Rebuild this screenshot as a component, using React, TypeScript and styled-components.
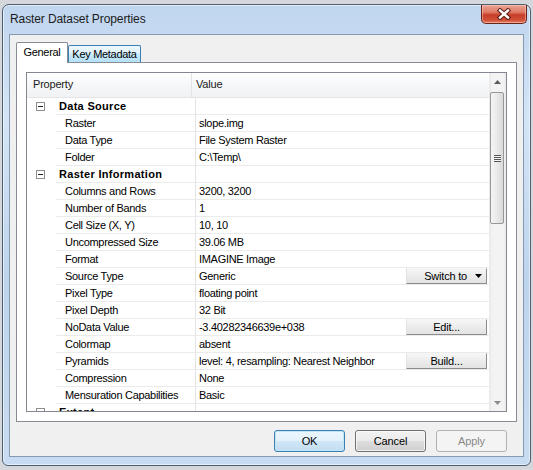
import React from 'react';
import styled, { createGlobalStyle } from 'styled-components';

const GlobalStyle = createGlobalStyle`
  html, body {
    margin: 0;
    padding: 0;
  }
  body {
    width: 533px;
    height: 470px;
    overflow: hidden;
    background: #d4d8dc;
    font-family: "Liberation Sans", Arial, sans-serif;
  }
  * {
    box-sizing: border-box;
  }
`;

const Window = styled.div`
  margin: 4px 2px 0;
  width: 529px;
  height: 462px;
  border: 1px solid #4f5f72;
  border-radius: 7px 7px 6px 6px;
  background: linear-gradient(180deg, #c0d6ef 0%, #d3e4f6 25%, #bdd4ed 60%, #c8dcf1 100%);
  box-shadow: inset 0 0 0 1px rgba(255, 255, 255, 0.55);
  padding: 0 6px 8px;
  display: flex;
  flex-direction: column;
`;

const TitleBar = styled.div`
  height: 29px;
  display: flex;
  align-items: flex-start;
`;

const Title = styled.div`
  padding-left: 1px;
  line-height: 29px;
  font-size: 12px;
  letter-spacing: -0.1px;
  color: #1b1b1b;
`;

const CloseButton = styled.div`
  margin-left: auto;
  margin-right: -3px;
  width: 46px;
  height: 19px;
  border: 1px solid #6b2418;
  border-top: none;
  border-radius: 0 0 5px 5px;
  background: linear-gradient(180deg, #eba495 0%, #de7a66 40%, #c73d27 55%, #d2523a 85%, #e4866a 100%);
  box-shadow: inset 0 0 0 1px rgba(255, 220, 210, 0.45);
  display: flex;
  align-items: center;
  justify-content: center;
`;

const Client = styled.div`
  flex: 1;
  border: 1px solid #8599b0;
  background: #f0f0f0;
  padding: 7px 6px 4px;
  display: flex;
  flex-direction: column;
`;

const TabStrip = styled.div`
  height: 20px;
  display: flex;
  align-items: flex-end;
  position: relative;
  z-index: 1;
`;

const Tab = styled.div<{ $selected?: boolean; $width: number }>`
  width: ${p => p.$width}px;
  height: ${p => (p.$selected ? 21 : 17)}px;
  margin-bottom: ${p => (p.$selected ? -1 : 0)}px;
  border: 1px solid ${p => (p.$selected ? '#898c95' : '#3c7fb1')};
  border-bottom: none;
  border-radius: 2px 2px 0 0;
  background: ${p =>
    p.$selected
      ? '#ffffff'
      : 'linear-gradient(180deg, #eef8fe 0%, #e0f2fc 45%, #c9ebfd 50%, #b5e0f7 100%)'};
  font-size: 11px;
  letter-spacing: -0.3px;
  line-height: ${p => (p.$selected ? 19 : 16)}px;
  text-align: center;
  color: #000;
`;

const TabPanel = styled.div`
  height: 360px;
  border: 1px solid #898c95;
  background: #ffffff;
  padding: 9px;
`;

const Grid = styled.div`
  height: 100%;
  border: 1px solid #828790;
  display: flex;
`;

const GridBody = styled.div`
  flex: 1;
  display: flex;
  flex-direction: column;
  overflow: hidden;
  background: #ffffff;
`;

const Header = styled.div`
  height: 25px;
  flex: none;
  display: flex;
  border-bottom: 1px solid #e3e4e6;
  background: linear-gradient(180deg, #ffffff 0%, #f7f8f9 45%, #f1f2f4 100%);
`;

const HeaderCell = styled.div<{ $width?: number }>`
  ${p => (p.$width ? `width: ${p.$width}px; flex: none;` : 'flex: 1;')}
  padding-left: ${p => (p.$width ? 6 : 4)}px;
  border-right: ${p => (p.$width ? '1px solid #e3e4e6' : 'none')};
  font-size: 11px;
  letter-spacing: -0.2px;
  line-height: 23px;
  color: #1a1a1a;
`;

const Row = styled.div`
  height: 17px;
  flex: none;
  display: flex;
  font-size: 11px;
  line-height: 16px;
  color: #000;
`;

const Gutter = styled.div`
  width: 29px;
  flex: none;
  display: flex;
  align-items: center;
`;

const ExpandBox = styled.div`
  margin-left: 9px;
  width: 9px;
  height: 9px;
  border: 1px solid #8f8f8f;
  background: #fff;
  display: flex;
  align-items: center;
  justify-content: center;

  &::after {
    content: '';
    width: 5px;
    height: 1px;
    background: #222;
  }
`;

const PropCell = styled.div<{ $category?: boolean }>`
  width: 140px;
  flex: none;
  padding-left: ${p => (p.$category ? 3 : 9)}px;
  border-right: 1px solid #e3e3e3;
  border-bottom: 1px solid #ebebeb;
  font-weight: ${p => (p.$category ? 'bold' : 'normal')};
  letter-spacing: ${p => (p.$category ? '0.3px' : '-0.3px')};
  white-space: nowrap;
  overflow: hidden;
`;

const ValueCell = styled.div`
  flex: 1;
  min-width: 0;
  display: flex;
  padding-left: 3px;
  border-bottom: 1px solid #ebebeb;
`;

const ValueText = styled.span`
  flex: 1;
  min-width: 0;
  white-space: nowrap;
  overflow: hidden;
  letter-spacing: -0.3px;
`;

const CellButton = styled.div<{ $dropdown?: boolean }>`
  width: 81px;
  height: 16px;
  flex: none;
  margin-right: 2px;
  display: flex;
  align-items: center;
  justify-content: ${p => (p.$dropdown ? 'flex-end' : 'center')};
  gap: 8px;
  padding: 0 ${p => (p.$dropdown ? 4 : 0)}px 0 0;
  border: 1px solid;
  border-color: #f6f6f6 #8c8c8c #8c8c8c #e2e2e2;
  background: linear-gradient(180deg, #f6f6f6 0%, #ececec 50%, #e2e2e2 100%);
  font-size: 11px;
  letter-spacing: -0.2px;
  color: #000;
`;

const ScrollBar = styled.div`
  width: 17px;
  flex: none;
  display: flex;
  flex-direction: column;
  background: linear-gradient(90deg, #e9e9e9 0%, #f3f3f3 20%, #f3f3f3 85%, #e9e9e9 100%);
`;

const ScrollArrow = styled.div`
  height: 17px;
  flex: none;
  display: flex;
  align-items: center;
  justify-content: center;
`;

const Thumb = styled.div`
  margin: 2px 2px 0 1px;
  height: 132px;
  flex: none;
  border: 1px solid #979797;
  border-radius: 2px;
  background: linear-gradient(90deg, #f5f5f5 0%, #ebebeb 45%, #d9d9d9 100%);
  display: flex;
  align-items: center;
  justify-content: center;
`;

const Grip = styled.div`
  width: 7px;
  height: 7px;
  background: repeating-linear-gradient(180deg, #555 0 1px, #f4f4f4 1px 2px);
`;

const Track = styled.div`
  flex: 1;
`;

const ButtonRow = styled.div`
  margin-top: 8px;
  padding-right: 10px;
  display: flex;
  justify-content: flex-end;
  gap: 10px;
`;

const DialogButton = styled.div<{ $variant?: 'default' | 'disabled' }>`
  width: 71px;
  height: 22px;
  border-radius: 3px;
  border: 1px solid
    ${p => (p.$variant === 'default' ? '#3c7fb1' : p.$variant === 'disabled' ? '#adb2b5' : '#707070')};
  background: ${p =>
    p.$variant === 'disabled'
      ? '#f4f4f4'
      : p.$variant === 'default'
      ? 'linear-gradient(180deg, #eaf6fd 0%, #e4f1fb 48%, #cfe6f6 52%, #c3def2 100%)'
      : 'linear-gradient(180deg, #f2f2f2 0%, #ebebeb 48%, #dddddd 52%, #cfcfcf 100%)'};
  box-shadow: ${p =>
    p.$variant === 'default'
      ? 'inset 0 0 0 1px #c2e4f6'
      : p.$variant === 'disabled'
      ? 'none'
      : 'inset 0 0 0 1px rgba(255, 255, 255, 0.7)'};
  display: flex;
  align-items: center;
  justify-content: center;
  font-size: 11px;
  letter-spacing: -0.1px;
  color: ${p => (p.$variant === 'disabled' ? '#8a8a8a' : '#000')};
`;

type GridRow =
  | { kind: 'cat'; label: string }
  | { kind: 'prop'; label: string; value: string; action?: string; dropdown?: boolean };

const rows: GridRow[] = [
  { kind: 'cat', label: 'Data Source' },
  { kind: 'prop', label: 'Raster', value: 'slope.img' },
  { kind: 'prop', label: 'Data Type', value: 'File System Raster' },
  { kind: 'prop', label: 'Folder', value: 'C:\\Temp\\' },
  { kind: 'cat', label: 'Raster Information' },
  { kind: 'prop', label: 'Columns and Rows', value: '3200, 3200' },
  { kind: 'prop', label: 'Number of Bands', value: '1' },
  { kind: 'prop', label: 'Cell Size (X, Y)', value: '10, 10' },
  { kind: 'prop', label: 'Uncompressed Size', value: '39.06 MB' },
  { kind: 'prop', label: 'Format', value: 'IMAGINE Image' },
  { kind: 'prop', label: 'Source Type', value: 'Generic', action: 'Switch to', dropdown: true },
  { kind: 'prop', label: 'Pixel Type', value: 'floating point' },
  { kind: 'prop', label: 'Pixel Depth', value: '32 Bit' },
  { kind: 'prop', label: 'NoData Value', value: '-3.40282346639e+038', action: 'Edit...' },
  { kind: 'prop', label: 'Colormap', value: 'absent' },
  { kind: 'prop', label: 'Pyramids', value: 'level: 4, resampling: Nearest Neighbor', action: 'Build...' },
  { kind: 'prop', label: 'Compression', value: 'None' },
  { kind: 'prop', label: 'Mensuration Capabilities', value: 'Basic' },
  { kind: 'cat', label: 'Extent' },
];

const CloseIcon = () => (
  <svg width="14" height="12" viewBox="0 0 14 12">
    <path d="M3 2.5 L11 9.5 M11 2.5 L3 9.5" stroke="#5a1a12" strokeWidth="4.4" strokeLinecap="square" fill="none" />
    <path d="M3 2.5 L11 9.5 M11 2.5 L3 9.5" stroke="#ffffff" strokeWidth="2.4" strokeLinecap="square" fill="none" />
  </svg>
);

const Arrow = ({ down, color }: { down?: boolean; color: string }) => (
  <svg width="7" height="4" viewBox="0 0 7 4">
    <path d={down ? 'M0 0 H7 L3.5 4 Z' : 'M0 4 H7 L3.5 0 Z'} fill={color} />
  </svg>
);

const App: React.FC = () => {
  return (
    <>
      <GlobalStyle />
      <Window>
        <TitleBar>
          <Title>Raster Dataset Properties</Title>
          <CloseButton>
            <CloseIcon />
          </CloseButton>
        </TitleBar>
        <Client>
          <TabStrip>
            <Tab $selected $width={52}>General</Tab>
            <Tab $width={73}>Key Metadata</Tab>
          </TabStrip>
          <TabPanel>
            <Grid>
              <GridBody>
                <Header>
                  <HeaderCell $width={165}>Property</HeaderCell>
                  <HeaderCell>Value</HeaderCell>
                </Header>
                {rows.map((row, i) =>
                  row.kind === 'cat' ? (
                    <Row key={i}>
                      <Gutter>
                        <ExpandBox />
                      </Gutter>
                      <PropCell $category>{row.label}</PropCell>
                      <ValueCell />
                    </Row>
                  ) : (
                    <Row key={i}>
                      <Gutter />
                      <PropCell>{row.label}</PropCell>
                      <ValueCell>
                        <ValueText>{row.value}</ValueText>
                        {row.action && (
                          <CellButton $dropdown={row.dropdown}>
                            {row.action}
                            {row.dropdown && <Arrow down color="#000" />}
                          </CellButton>
                        )}
                      </ValueCell>
                    </Row>
                  )
                )}
              </GridBody>
              <ScrollBar>
                <ScrollArrow>
                  <Arrow color="#5c5c5c" />
                </ScrollArrow>
                <Thumb>
                  <Grip />
                </Thumb>
                <Track />
                <ScrollArrow>
                  <Arrow down color="#8c8c8c" />
                </ScrollArrow>
              </ScrollBar>
            </Grid>
          </TabPanel>
          <ButtonRow>
            <DialogButton $variant="default">OK</DialogButton>
            <DialogButton>Cancel</DialogButton>
            <DialogButton $variant="disabled">Apply</DialogButton>
          </ButtonRow>
        </Client>
      </Window>
    </>
  );
};

export default App;
